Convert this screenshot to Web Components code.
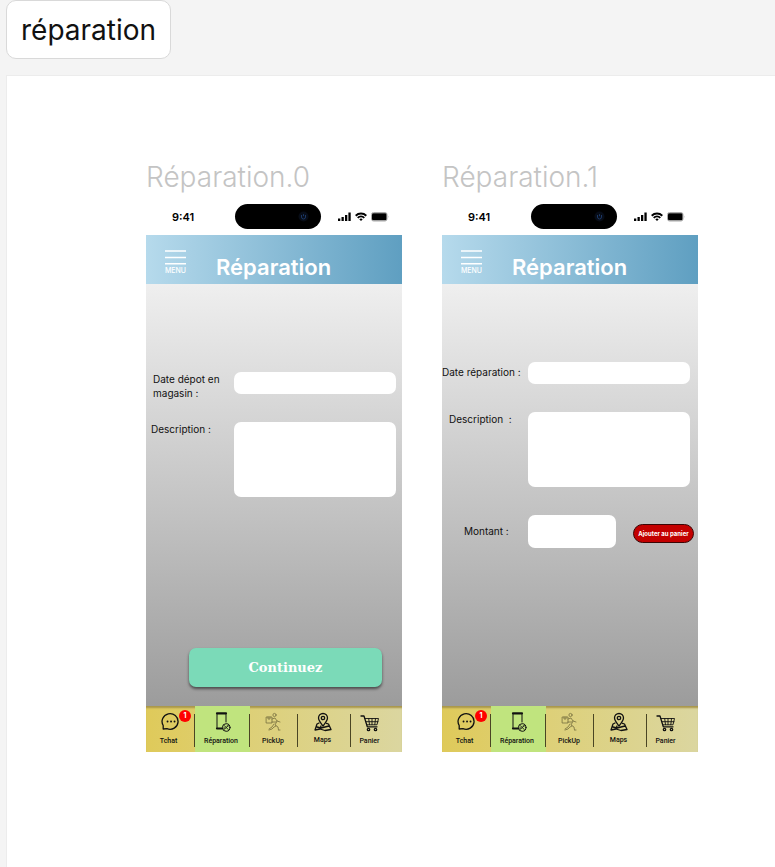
<!DOCTYPE html>
<html lang="fr">
<head>
<meta charset="utf-8">
<title>réparation</title>
<style>
  body { margin: 0; min-height: 100vh; display: flex; flex-direction: column; background: #f4f4f4; font-family: Inter, "Liberation Sans", sans-serif; color: #111; }
</style>
</head>
<body>
<section-board name="réparation">
  <phone-frame caption="Réparation.0">
    <form-row kind="input" label-width="88" indent="7">Date dépot en magasin :</form-row>
    <form-row kind="textarea" label-width="88" indent="5">Description :</form-row>
    <action-button slot="footer">Continuez</action-button>
  </phone-frame>
  <phone-frame caption="Réparation.1" style="--form-top:78px; --form-right:8px">
    <form-row kind="input" label-width="86" indent="0" style="--label-top:3px">Date réparation :</form-row>
    <form-row kind="textarea" label-width="86" indent="7">Description &nbsp;:</form-row>
    <form-row kind="amount" label-width="86" indent="22" style="--label-top:9px">Montant :<cart-button slot="after">Ajouter au panier</cart-button></form-row>
  </phone-frame>
</section-board>

<script>
const define = (name, html, setup) => customElements.define(name, class extends HTMLElement {
  constructor() {
    super();
    this.attachShadow({ mode: 'open' });
  }
  connectedCallback() {
    if (this.shadowRoot.firstChild) return;
    const t = document.createElement('template');
    t.innerHTML = html;
    this.shadowRoot.append(t.content.cloneNode(true));
    if (setup) setup(this, this.shadowRoot);
  }
});

define('section-board', `
<style>
  :host { flex: 1; display: flex; flex-direction: column; padding-left: 6px; }
  h1 { align-self: flex-start; box-sizing: border-box; margin: 0 0 16px; padding: 13px 14px 12px; border: 1px solid #d9d9d9; border-radius: 10px; background: #fff; font-size: 28px; line-height: 32px; font-weight: 400; color: #111; }
  main { flex: 1; display: flex; flex-wrap: wrap; align-items: flex-start; align-content: flex-start; gap: 40px; padding: 84px 40px 84px 139px; background: #fff; border: 1px solid #ececec; border-width: 1px 0 0 1px; }
</style>
<h1></h1><main><slot></slot></main>`,
(h, r) => { r.querySelector('h1').textContent = h.getAttribute('name'); });

define('phone-frame', `
<style>
  :host { flex: 0 1 256px; min-width: 256px; display: flex; flex-direction: column; }
  h2 { margin: 0 0 9px; font-size: 28px; line-height: 35px; font-weight: 300; color: #c4c4c4; white-space: nowrap; }
  form { flex: 1; min-height: 422px; box-sizing: border-box; display: flex; flex-direction: column; gap: 28px; padding: var(--form-top, 88px) var(--form-right, 6px) 19px 0; background: linear-gradient(#efefef, #9c9c9c); }
  slot[name=footer] { display: block; margin-top: auto; }
</style>
<h2></h2>
<status-bar></status-bar>
<app-header>Réparation</app-header>
<form><slot></slot><slot name="footer"></slot></form>
<tab-bar></tab-bar>`,
(h, r) => { r.querySelector('h2').textContent = h.getAttribute('caption'); });

define('status-bar', `
<style>
  :host { display: grid; grid-template-columns: 89px 86px 1fr; align-items: center; height: 25px; padding-bottom: 6px; background: #fff; }
  time { padding-left: 26px; font-size: 11px; line-height: 14px; font-weight: 600; color: #000; }
  .island { height: 25px; box-sizing: border-box; border-radius: 13px; background: #000; display: flex; align-items: center; justify-content: flex-end; padding-right: 12px; }
  .signals { display: flex; align-items: center; gap: 4px; padding-left: 17px; }
</style>
<time>9:41</time>
<div class="island"><svg width="11" height="11" viewBox="0 0 11 11"><circle cx="5.500" cy="5.500" r="5" fill="#070c16"/><path d="M3.500 4v2a2 2 0 0 0 4 0V4M5.500 3.200v2" fill="none" stroke="#1b3765"/></svg></div>
<div class="signals">
  <svg width="13" height="10" viewBox="0 0 13 10"><path d="M0 6.500h2.300V9H0zM3.500 5h2.300v4H3.500zM7 3h2.300v6H7zM10.400 0.500h2.300V9h-2.300z"/></svg>
  <svg width="12" height="10" viewBox="0 0 12 10" fill="none" stroke="#000" stroke-width="1.900"><path d="M.7 3.700a7.600 7.600 0 0 1 10.600 0M2.700 5.900a4.700 4.700 0 0 1 6.600 0"/><path d="M4.300 7.300a2.500 2.500 0 0 1 3.400 0L6 9z" fill="#000" stroke="none"/></svg>
  <svg width="18" height="10" viewBox="0 0 18 10"><rect x=".5" y=".5" width="15.500" height="8.500" rx="2" fill="#fff" stroke="#aaa"/><rect x="1" y="1.200" width="14.500" height="7.100" rx="1.300"/><path d="M17 3.500q1 1.300 0 2.600z" fill="#aaa"/></svg>
</div>`);

define('app-header', `
<style>
  :host { display: flex; align-items: flex-start; height: 49px; background: linear-gradient(90deg, #b6daec, #5f9fc1); color: #fff; }
  button { margin: 15px 0 0 17px; padding: 0; width: 25px; display: flex; flex-direction: column; align-items: center; gap: 2px; border: 0; background: none; color: inherit; font: 500 7px/8px Inter, sans-serif; }
  h3 { margin: 18px 0 0 28px; font: 600 22px/28px Inter, sans-serif; }
</style>
<button type="button"><svg width="21" height="15" viewBox="0 0 21 15" stroke="#fff" stroke-width="1.500"><path d="M0 1h21M0 7.500h21M0 13.700h21"/></svg>MENU</button>
<h3><slot></slot></h3>`);

define('form-row', `
<style>
  :host { display: flex; align-items: flex-start; color: #111; }
  :host([kind=input]) { height: 22px; }
  label { flex: none; box-sizing: border-box; padding-top: var(--label-top, 0); font-size: 10px; line-height: 14px; }
  input, textarea { flex: 1; min-width: 0; box-sizing: border-box; margin: 0; padding: 4px 8px; border: 0; border-radius: 7px; background: #fff; resize: none; font: 10px/14px Inter, sans-serif; }
  input { height: 22px; }
  textarea { height: 75px; }
  :host([kind=amount]) input { flex: none; width: 88px; height: 33px; }
</style>
<label for="field"><slot></slot></label>`,
(h, r) => {
  const field = document.createElement(h.getAttribute('kind') === 'textarea' ? 'textarea' : 'input');
  field.id = 'field';
  const label = r.querySelector('label');
  label.style.width = h.getAttribute('label-width') + 'px';
  label.style.paddingLeft = h.getAttribute('indent') + 'px';
  const after = document.createElement('slot');
  after.name = 'after';
  r.append(field, after);
});

define('action-button', `
<style>
  :host { display: block; padding: 0 14px 0 43px; }
  button { width: 100%; height: 39px; border: 0; border-radius: 7px; background: #7bdab8; box-shadow: 0 2px 3px #0008; color: #fff; font: 700 13px/20px "DejaVu Serif", serif; }
</style>
<button type="button"><slot></slot></button>`);

define('cart-button', `
<style>
  :host { flex: none; margin: 9px -4px 0 17px; }
  button { display: block; width: 61px; height: 19px; padding: 0; border: 1px solid #3c0505; border-radius: 10px; background: #c30000; color: #fff; font: 700 6px/8px Inter, sans-serif; white-space: nowrap; }
</style>
<button type="button"><slot></slot></button>`);

define('tab-bar', `
<style>
  :host { display: block; background: linear-gradient(90deg, #dfca5a, #ddd17e 50%, #dbd6a0); box-shadow: inset 0 3px 2px -1px #a8964a; }
  nav { display: grid; grid-template-columns: 49fr 55fr 48fr 53fr 51fr; height: 46px; }
  a { position: relative; display: flex; flex-direction: column; align-items: center; box-sizing: border-box; padding-top: 6px; color: #111; text-decoration: none; font: 500 7px/10px Roboto, sans-serif; }
  a:not(:last-child) { background: linear-gradient(#4a4524, #4a4524) right 8px / 1px 33px no-repeat; }
  a:nth-child(1) { padding-right: 4px; }
  a:nth-child(2) { padding-right: 3px; background-color: #c0e47e; }
  a:nth-child(3) { padding-right: 2px; }
  a:nth-child(4) { padding-right: 4px; }
  a:nth-child(5) { padding-right: 14px; }
  a:nth-child(4) svg { margin-bottom: 1px; }
  svg { flex: none; margin-bottom: 2px; width: 20px; height: 22px; fill: none; stroke: #111; stroke-width: 1.300; stroke-linecap: round; stroke-linejoin: round; }
  b { position: absolute; left: 33px; top: 4px; width: 12px; height: 12px; border-radius: 50%; background: #f00; color: #fff; font: 700 7px/12px Inter, sans-serif; text-align: center; }
</style>
<nav>
  <a href="#tchat"><svg viewBox="0 0 20 22"><path d="M4.200 17v-3.500A8 7.800 0 1 1 8 16.700z"/><path d="M8.500 9.500h.1M12 9.500h.1M15.500 9.500h.1" stroke-width="1.800"/></svg>Tchat<b>1</b></a>
  <a href="#reparation"><svg viewBox="0 0 20 22"><path d="M6 2v14M15 2v8" stroke-width="1"/><path d="M6 1.300h9M6 16.500h5" stroke-width="2.200"/><circle cx="15.200" cy="15.500" r="3.800" stroke-width="1"/><path d="m13.200 13.500 4 4m0-4-4 4m-.5-1.500h1m2.500-2h1" stroke-width=".9"/></svg>Réparation</a>
  <a href="#pickup"><svg viewBox="0 0 20 22" style="stroke:#77703f;stroke-width:.8"><circle cx="11.500" cy="3" r="1.600"/><path d="M3.500 5h5.500v6H3.500zM5 5v2h2V5M9 7l3-1 2 3 3 1M14 9l-2 4 3 2 .5 3M11 12l-2 3-3 2M13 14l-2 1-2 2-3 1M9 10h4M16 18h1"/></svg>PickUp</a>
  <a href="#maps"><svg viewBox="0 0 20 22"><path d="M10 14c-3-3.800-4.500-5.600-4.500-8a4.500 4.500 0 0 1 9 0c0 2.400-1.500 4.200-4.500 8z"/><circle cx="10" cy="6" r="1.700"/><path d="M6 11 4 12l-2 6 5-1 5 1.500 6-1L15.500 12l-2-.7M7 17l1-3M4 15l4 1 8-2"/></svg>Maps</a>
  <a href="#panier"><svg viewBox="0 0 20 22"><path d="M1 4h3l3.300 10.800H17" /><path d="M5 6.500h13.500L17 12.800H7M6 9.700h12M8.700 6.700l.8 6M12 6.700v6M15.500 6.700l-.7 6" stroke-width=".9"/><circle cx="8.500" cy="17.500" r="1.200"/><circle cx="15.500" cy="17.500" r="1.200"/></svg>Panier</a>
</nav>`);
</script>
</body>
</html>
